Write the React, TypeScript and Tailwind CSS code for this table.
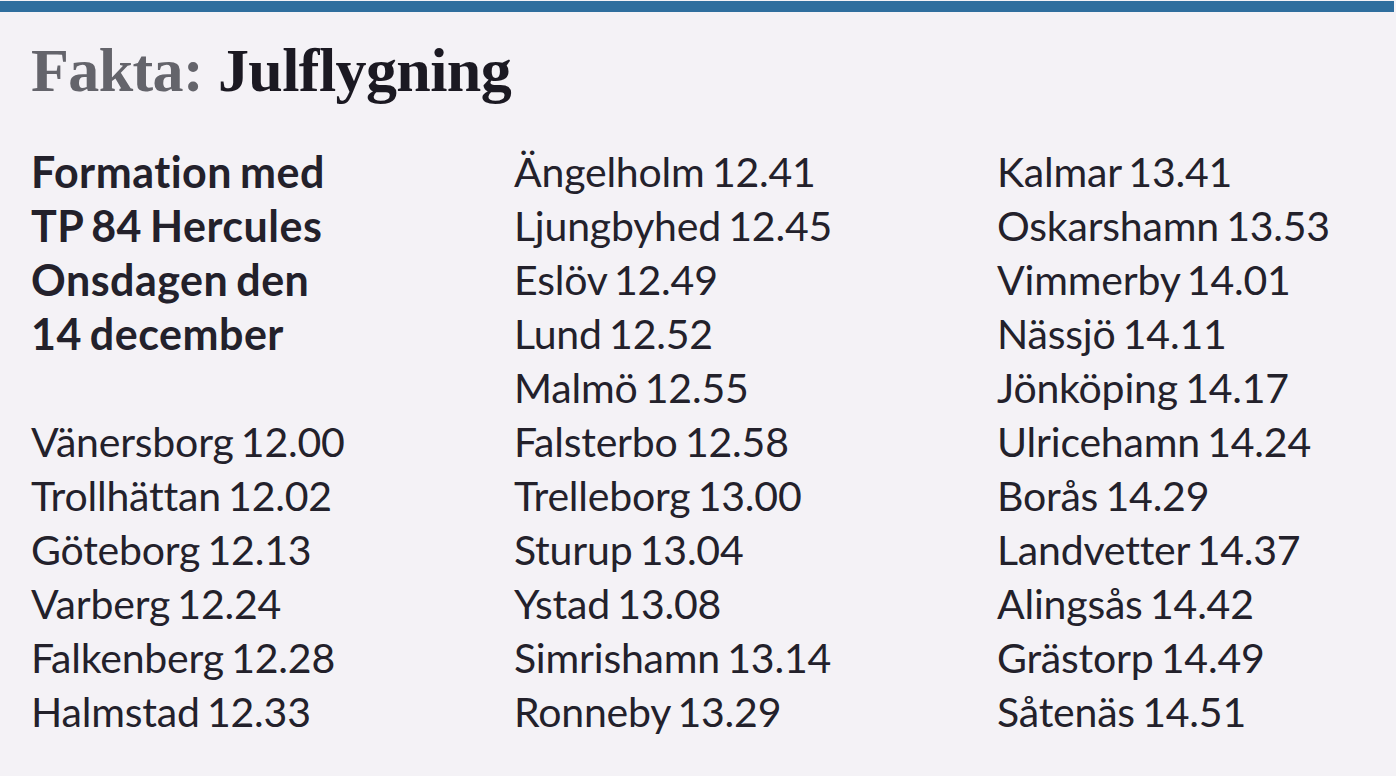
const col1 = [
  "Vänersborg 12.00",
  "Trollhättan 12.02",
  "Göteborg 12.13",
  "Varberg 12.24",
  "Falkenberg 12.28",
  "Halmstad 12.33",
];

const col2 = [
  "Ängelholm 12.41",
  "Ljungbyhed 12.45",
  "Eslöv 12.49",
  "Lund 12.52",
  "Malmö 12.55",
  "Falsterbo 12.58",
  "Trelleborg 13.00",
  "Sturup 13.04",
  "Ystad 13.08",
  "Simrishamn 13.14",
  "Ronneby 13.29",
];

const col3 = [
  "Kalmar 13.41",
  "Oskarshamn 13.53",
  "Vimmerby 14.01",
  "Nässjö 14.11",
  "Jönköping 14.17",
  "Ulricehamn 14.24",
  "Borås 14.29",
  "Landvetter 14.37",
  "Alingsås 14.42",
  "Grästorp 14.49",
  "Såtenäs 14.51",
];

const intro = ["Formation med", "TP 84 Hercules", "Onsdagen den", "14 december"];

export default function App() {
  return (
    <div className="h-[776px] w-[1396px] overflow-hidden bg-[#f4f2f6]">
      <div className="mt-px h-[11px] w-[1394px] bg-[#2f6e9e]" />
      <div className="pl-[31px] pr-4">
        {/* Title */}
        <h1 className="mt-[22px] font-['Liberation_Serif',serif] text-[62px] font-bold leading-[72px] tracking-[-0.6px]">
          <span className="text-[#64646b]">Fakta: </span>
          <span className="text-[#1b1922]">Julflygning</span>
        </h1>

        {/* Schedule */}
        <div className="mt-[39px] grid grid-cols-[483px_483px_1fr] font-['Lato',sans-serif] text-[41px] leading-[54px] tracking-[-0.2px] [word-spacing:-3px] text-[#23212b]">
          <div>
            {intro.map((line) => (
              <p key={line} className="text-[43px] font-bold tracking-[0.5px]">
                {line}
              </p>
            ))}
            <p className="h-[54px]" />
            {col1.map((line) => (
              <p key={line}>{line}</p>
            ))}
          </div>
          <div>
            {col2.map((line) => (
              <p key={line}>{line}</p>
            ))}
          </div>
          <div>
            {col3.map((line) => (
              <p key={line}>{line}</p>
            ))}
          </div>
        </div>
      </div>
    </div>
  );
}
